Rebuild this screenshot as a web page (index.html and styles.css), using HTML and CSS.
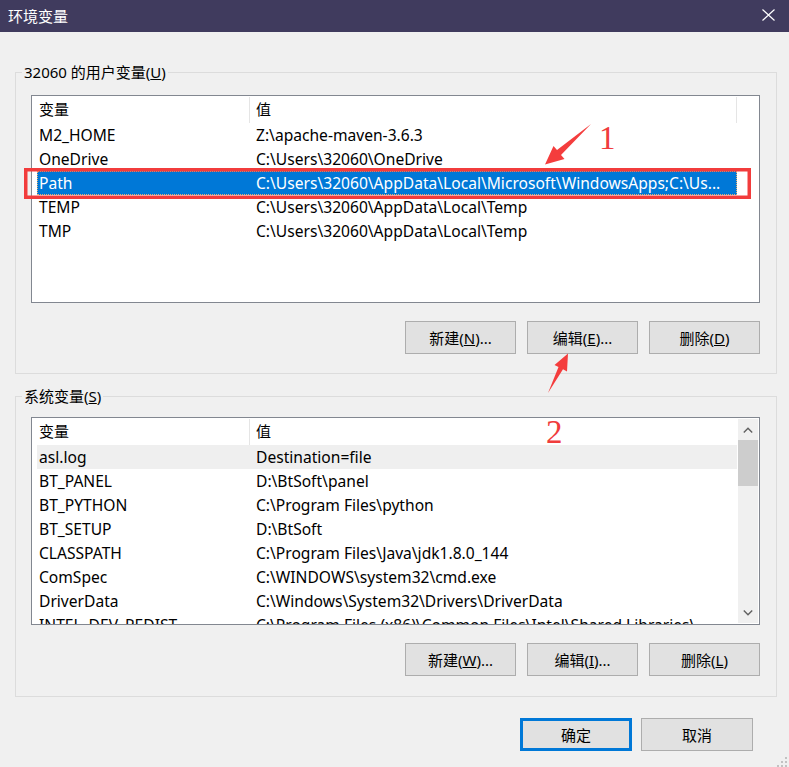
FILE: index.html
```html
<!DOCTYPE html>
<html lang="zh-CN">
<head>
<meta charset="utf-8">
<title>环境变量</title>
<link rel="stylesheet" href="styles.css">
</head>
<body>
<div class="window">
  <div class="titlebar">
    <span class="title">环境变量</span>
    <svg class="close" width="13" height="12" viewBox="0 0 13 12"><path d="M0.5 0.5 L12.5 11.5 M12.5 0.5 L0.5 11.5" stroke="#ffffff" stroke-width="1.2" fill="none"/></svg>
  </div>
  <div class="content">
    <fieldset class="group group-user">
      <legend>32060 的用户变量(<u>U</u>)</legend>
      <div class="list">
        <div class="rows">
          <div class="row header"><div class="c1">变量</div><div class="c2">值</div></div>
          <div class="row"><div class="c1">M2_HOME</div><div class="c2">Z:\apache-maven-3.6.3</div></div>
          <div class="row"><div class="c1">OneDrive</div><div class="c2">C:\Users\32060\OneDrive</div></div>
          <div class="row selected"><div class="c1">Path</div><div class="c2">C:\Users\32060\AppData\Local\Microsoft\WindowsApps;C:\Us...</div></div>
          <div class="row"><div class="c1">TEMP</div><div class="c2">C:\Users\32060\AppData\Local\Temp</div></div>
          <div class="row"><div class="c1">TMP</div><div class="c2">C:\Users\32060\AppData\Local\Temp</div></div>
        </div>
      </div>
      <div class="btns">
        <div class="btn">新建(<u>N</u>)...</div>
        <div class="btn">编辑(<u>E</u>)...</div>
        <div class="btn">删除(<u>D</u>)</div>
      </div>
    </fieldset>

    <fieldset class="group group-sys">
      <legend>系统变量(<u>S</u>)</legend>
      <div class="list">
        <div class="rows">
          <div class="row header"><div class="c1">变量</div><div class="c2 no-end">值</div></div>
          <div class="row hover"><div class="c1">asl.log</div><div class="c2">Destination=file</div></div>
          <div class="row"><div class="c1">BT_PANEL</div><div class="c2">D:\BtSoft\panel</div></div>
          <div class="row"><div class="c1">BT_PYTHON</div><div class="c2">C:\Program Files\python</div></div>
          <div class="row"><div class="c1">BT_SETUP</div><div class="c2">D:\BtSoft</div></div>
          <div class="row"><div class="c1">CLASSPATH</div><div class="c2">C:\Program Files\Java\jdk1.8.0_144</div></div>
          <div class="row"><div class="c1">ComSpec</div><div class="c2">C:\WINDOWS\system32\cmd.exe</div></div>
          <div class="row"><div class="c1">DriverData</div><div class="c2">C:\Windows\System32\Drivers\DriverData</div></div>
          <div class="row"><div class="c1">INTEL_DEV_REDIST</div><div class="c2">C:\Program Files (x86)\Common Files\Intel\Shared Libraries\</div></div>
        </div>
        <div class="scrollbar">
          <div class="sb-btn"><svg width="10" height="6" viewBox="0 0 10 6"><path d="M0.8 5.4 L5 1.2 L9.2 5.4" stroke="#606060" stroke-width="1.4" fill="none"/></svg></div>
          <div class="sb-thumb"></div>
          <div class="sb-track"></div>
          <div class="sb-btn"><svg width="10" height="6" viewBox="0 0 10 6"><path d="M0.8 0.6 L5 4.8 L9.2 0.6" stroke="#606060" stroke-width="1.4" fill="none"/></svg></div>
        </div>
      </div>
      <div class="btns">
        <div class="btn">新建(<u>W</u>)...</div>
        <div class="btn">编辑(<u>I</u>)...</div>
        <div class="btn">删除(<u>L</u>)</div>
      </div>
    </fieldset>

    <div class="dialog-btns">
      <div class="btn btn-default">确定</div>
      <div class="btn">取消</div>
    </div>
  </div>

  <svg class="annot" width="789" height="767" viewBox="0 0 789 767">
    <rect x="25.75" y="169.75" width="723.5" height="27.5" fill="none" stroke="#f23c3c" stroke-width="3.5"/>
    <polygon points="591,124 561,155 564.5,159 545,164.5 553.5,146 557,150" fill="#f43d3d"/>
    <polygon points="548,393 558.5,367 554.5,365 568,353.5 567,371.5 563,369.3" fill="#f43d3d"/>
    <text x="599" y="149" class="num">1</text>
    <text x="546" y="443" class="num">2</text>
    <g fill="#c2c2c2">
      <rect x="785" y="757" width="2" height="2"/>
      <rect x="785" y="761" width="2" height="2"/>
      <rect x="781" y="761" width="2" height="2"/>
      <rect x="785" y="765" width="2" height="2"/>
      <rect x="781" y="765" width="2" height="2"/>
      <rect x="777" y="765" width="2" height="2"/>
    </g>
  </svg>
</div>
</body>
</html>
```

FILE: styles.css
```css
html, body {
  margin: 0;
  padding: 0;
}
body {
  background: #f0f0f0;
  font-family: "Noto Sans", "Noto Sans CJK SC", sans-serif;
  color: #000;
}
.window {
  position: relative;
  width: 789px;
  height: 767px;
  overflow: hidden;
  background: #f0f0f0;
}
.titlebar {
  height: 32px;
  background: #403b5e;
  display: flex;
  align-items: center;
  justify-content: space-between;
  padding: 0 14px 0 8px;
}
.title {
  color: #ffffff;
  font-family: "Noto Sans CJK SC", sans-serif;
  font-size: 15px;
  line-height: 20px;
}
.close {
  display: block;
  margin-top: -3px;
}
.content {
  padding: 30px 12px 0 15px;
}
.group {
  margin: 0;
  border: 1px solid #dcdcdc;
  padding: 13px 16px 19px 15px;
  min-width: 0;
}
.group-sys {
  margin-top: 12px;
  padding-top: 11px;
  padding-bottom: 20px;
}
.group legend {
  font-size: 15px;
  line-height: 20px;
  padding: 0 2px;
  margin-left: -9px;
}
.list {
  height: 208px;
  box-sizing: border-box;
  border: 1px solid #828790;
  background: #ffffff;
  display: flex;
  overflow: hidden;
}
.rows {
  width: 700px;
  margin-left: 5px;
  flex: none;
  overflow: hidden;
}
.row {
  display: flex;
  height: 24px;
  line-height: 24px;
  font-size: 15.6px;
  white-space: nowrap;
}
.row .c1 {
  width: 212px;
  flex: none;
  padding-left: 2px;
  box-sizing: border-box;
  overflow: hidden;
}
.row .c2 {
  flex: 1;
  padding-left: 7px;
  overflow: hidden;
}
.row.header {
  height: 27px;
  line-height: 27px;
  font-size: 15px;
}
.row.header .c2 {
  border-left: 1px solid #e5e5e5;
  border-right: 1px solid #e5e5e5;
  padding-left: 6px;
  margin: 1px 0 0;
  line-height: 25px;
}
.row.header .c2.no-end {
  border-right: none;
}
.row.selected {
  background: #0078d7;
  color: #ffffff;
  outline: 1px dotted #e8b070;
  outline-offset: -1px;
}
.row.hover {
  background: #efefef;
}
.scrollbar {
  width: 20px;
  margin: 1px 1px 1px auto;
  background: #f0f0f0;
  display: flex;
  flex-direction: column;
}
.sb-btn {
  height: 21px;
  display: flex;
  align-items: center;
  justify-content: center;
  flex: none;
}
.sb-thumb {
  height: 46px;
  background: #cdcdcd;
  flex: none;
}
.sb-track {
  flex: 1;
}
.btns {
  display: flex;
  justify-content: flex-end;
  gap: 11px;
  margin-top: 18px;
}
.btn {
  width: 111px;
  height: 33px;
  box-sizing: border-box;
  border: 1px solid #adadad;
  background: #e1e1e1;
  display: flex;
  align-items: center;
  justify-content: center;
  font-size: 15px;
  white-space: nowrap;
}
.dialog-btns {
  display: flex;
  justify-content: flex-end;
  gap: 9px;
  margin-top: 21px;
  margin-right: 24px;
}
.dialog-btns .btn {
  width: 112px;
}
.btn-default {
  border: 3px solid #0078d7;
}
.annot {
  position: absolute;
  left: 0;
  top: 0;
  pointer-events: none;
}
.annot .num {
  font-family: "Liberation Serif", serif;
  font-size: 33px;
  fill: #f03c3c;
}
```
